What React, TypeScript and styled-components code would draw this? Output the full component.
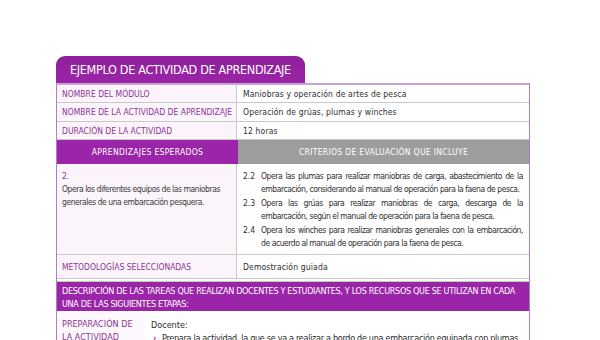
import styled, { createGlobalStyle } from "styled-components";

const GlobalStyle = createGlobalStyle`
  body {
    margin: 0;
    background: #ffffff;
    font-family: "DejaVu Sans Condensed", "DejaVu Sans", sans-serif;
    font-stretch: condensed;
  }
`;

const purple = "#9b25a8";
const labelColor = "#8a3596";
const lineColor = "#c9c9c9";

interface ICriterio {
  num: string,
  text: string,
}

const criterios: ICriterio[] = [
  {
    num: "2.2",
    text: "Opera las plumas para realizar maniobras de carga, abastecimiento de la embarcación, considerando al manual de operación para la faena de pesca.",
  },
  {
    num: "2.3",
    text: "Opera las grúas para realizar maniobras de carga, descarga de la embarcación, según el manual de operación para la faena de pesca.",
  },
  {
    num: "2.4",
    text: "Opera los winches para realizar maniobras generales con la embarcación, de acuerdo al manual de operación para la faena de pesca.",
  },
];

const Page = styled.div`
  padding: 56px 0 0 56px;
  width: 474px;
  height: 284px;
  overflow: hidden;
`;

const Tab = styled.div`
  width: 249px;
  height: 27px;
  box-sizing: border-box;
  padding: 6px 0 0 14px;
  border-radius: 9px 9px 0 0;
  background: linear-gradient(#8e1f9b, ${purple});
  color: #ffffff;
  font-size: 12.5px;
  letter-spacing: -0.3px;
  line-height: 15px;
  white-space: nowrap;
`;

const Table = styled.div`
  border-left: 1px solid #b27cc4;
  border-right: 1px solid #b27cc4;
  border-top: 2px solid #c9a3d6;
`;

const InfoRow = styled.div<{ $h: number }>`
  display: grid;
  grid-template-columns: 180px 1fr;
  height: ${(p) => p.$h}px;
  border-bottom: 1px solid ${lineColor};
`;

const Label = styled.div`
  display: flex;
  align-items: center;
  padding-left: 5px;
  background: #fcf4fb;
  border-right: 1px solid ${lineColor};
  color: ${labelColor};
  font-size: 8.5px;
  text-transform: uppercase;
  white-space: nowrap;
`;

const Value = styled.div`
  display: flex;
  align-items: center;
  padding-left: 6px;
  color: #2e2e2e;
  font-size: 8.5px;
  letter-spacing: 0.15px;
  white-space: nowrap;
`;

const HeadRow = styled.div`
  display: grid;
  grid-template-columns: 181px 1fr;
  height: 24px;
`;

const HeadCell = styled.div<{ $bg: string }>`
  display: flex;
  align-items: center;
  justify-content: center;
  background: ${(p) => p.$bg};
  color: #ffffff;
  font-size: 8.5px;
  letter-spacing: 0.3px;
  text-transform: uppercase;
`;

const ContentRow = styled.div`
  display: grid;
  grid-template-columns: 180px 1fr;
  height: 90px;
  border-bottom: 1px solid ${lineColor};
`;

const LeftCell = styled.div`
  background: #fcf4fb;
  border-right: 1px solid ${lineColor};
  padding: 6px 5px 0 5px;
  color: #3a3a3a;
  font-size: 8.5px;
  line-height: 13px;
  letter-spacing: -0.45px;
`;

const Num = styled.div`
  color: ${labelColor};
`;

const List = styled.div`
  padding: 6px 6px 0 6px;
  display: flex;
  flex-direction: column;
  gap: 1px;
`;

const Item = styled.div`
  display: flex;
  color: #2e2e2e;
  font-size: 8.5px;
  line-height: 13px;
`;

const ItemNum = styled.span`
  flex: 0 0 18px;
`;

const ItemText = styled.span`
  flex: 1;
  text-align: justify;
  letter-spacing: -0.45px;
`;

const Band = styled.div`
  margin-top: 2px;
  height: 30px;
  box-sizing: border-box;
  padding: 3px 6px 0 5px;
  border-top: 1px solid #b7d3a9;
  background: ${purple};
  color: #ffffff;
  font-size: 9px;
  line-height: 13px;
  letter-spacing: -0.32px;
  text-transform: uppercase;
`;

const StageRow = styled.div`
  display: grid;
  grid-template-columns: 88px 1fr;
`;

const StageLabel = styled.div`
  padding: 7px 4px 0 5px;
  background: #fdf8fc;
  color: ${labelColor};
  font-size: 9px;
  line-height: 13px;
  text-transform: uppercase;
`;

const StageBody = styled.div`
  padding: 8px 6px 0 6px;
  color: #2a2a2a;
  font-size: 9px;
  line-height: 13px;
`;

const Bullet = styled.div`
  display: flex;
  gap: 6px;
  white-space: nowrap;
  padding-left: 2px;
  letter-spacing: -0.3px;
  &::before {
    content: "›";
    color: ${purple};
    font-weight: bold;
  }
`;

function App() {
  return (
    <Page>
      <GlobalStyle />
      <Tab>EJEMPLO DE ACTIVIDAD DE APRENDIZAJE</Tab>
      <Table>
        <InfoRow $h={17}>
          <Label>Nombre del módulo</Label>
          <Value>Maniobras y operación de artes de pesca</Value>
        </InfoRow>
        <InfoRow $h={18}>
          <Label>Nombre de la actividad de aprendizaje</Label>
          <Value>Operación de grúas, plumas y winches</Value>
        </InfoRow>
        <InfoRow $h={17}>
          <Label>Duración de la actividad</Label>
          <Value>12 horas</Value>
        </InfoRow>
        <HeadRow>
          <HeadCell $bg={purple}>Aprendizajes esperados</HeadCell>
          <HeadCell $bg="#9d9d9d">Criterios de evaluación que incluye</HeadCell>
        </HeadRow>
        <ContentRow>
          <LeftCell>
            <Num>2.</Num>
            Opera los diferentes equipos de las maniobras generales de una embarcación pesquera.
          </LeftCell>
          <List>
            {criterios.map((c) => (
              <Item key={c.num}>
                <ItemNum>{c.num}</ItemNum>
                <ItemText>{c.text}</ItemText>
              </Item>
            ))}
          </List>
        </ContentRow>
        <InfoRow $h={23}>
          <Label>Metodologías seleccionadas</Label>
          <Value>Demostración guiada</Value>
        </InfoRow>
        <Band>
          Descripción de las tareas que realizan docentes y estudiantes, y los recursos que se utilizan en cada una de las siguientes etapas:
        </Band>
        <StageRow>
          <StageLabel>Preparación de la actividad</StageLabel>
          <StageBody>
            <div>Docente:</div>
            <Bullet>Prepara la actividad, la que se va a realizar a bordo de una embarcación equipada con plumas</Bullet>
          </StageBody>
        </StageRow>
      </Table>
    </Page>
  );
}
export default App;
